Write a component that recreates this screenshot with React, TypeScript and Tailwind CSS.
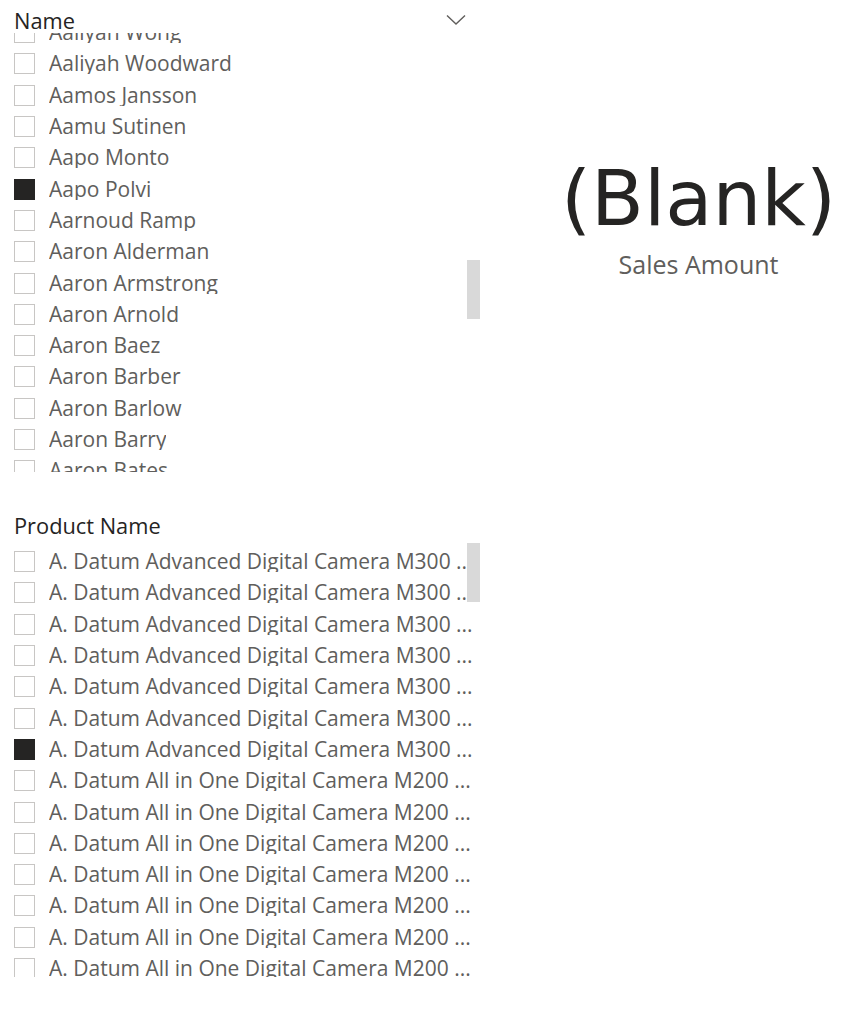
import React from 'react';

const names = [
  'Aaliyah Wong',
  'Aaliyah Woodward',
  'Aamos Jansson',
  'Aamu Sutinen',
  'Aapo Monto',
  'Aapo Polvi',
  'Aarnoud Ramp',
  'Aaron Alderman',
  'Aaron Armstrong',
  'Aaron Arnold',
  'Aaron Baez',
  'Aaron Barber',
  'Aaron Barlow',
  'Aaron Barry',
  'Aaron Bates',
];

const products = [
  ...Array(7).fill('A. Datum Advanced Digital Camera M300 ...'),
  ...Array(7).fill('A. Datum All in One Digital Camera M200 ...'),
];

const font = { fontFamily: '"Open Sans", "Noto Sans", sans-serif' };

const Checkbox: React.FC<{ checked?: boolean }> = ({ checked }) => (
  <span
    className={`shrink-0 w-[21px] h-[21px] border-[1.5px] ${
      checked ? 'bg-[#252423] border-[#252423]' : 'bg-white border-[#c8c6c4]'
    }`}
  />
);

const Row: React.FC<{ label: string; checked?: boolean }> = ({ label, checked }) => (
  <div className="h-[31.3px] flex items-center gap-[14px] pl-[14px]">
    <Checkbox checked={checked} />
    <span className="whitespace-nowrap overflow-hidden text-[21px] text-[#605e5c] leading-none">
      {label}
    </span>
  </div>
);

const Slicer: React.FC<{
  title: string;
  items: string[];
  checkedIndex: number;
  offset: number;
  thumbTop: number;
  chevron?: boolean;
}> = ({ title, items, checkedIndex, offset, thumbTop, chevron }) => (
  <div className="w-[480px]" style={font}>
    <div className="h-[33px] flex items-center justify-between pl-[14px] pr-[14px]">
      <span className="text-[21.8px] text-[#252423] leading-none mt-[9px]">{title}</span>
      {chevron && (
        <svg width="20" height="12" viewBox="0 0 20 12" className="mt-[6px]">
          <path d="M1 1.5 L10 10 L19 1.5" fill="none" stroke="#605e5c" strokeWidth="1.4" />
        </svg>
      )}
    </div>
    <div className="relative h-[439px] overflow-hidden">
      <div className="w-[480px]" style={{ marginTop: offset }}>
        {items.map((it, i) => (
          <Row key={i} label={it} checked={i === checkedIndex} />
        ))}
      </div>
      <div
        className="absolute right-0 w-[13px] h-[59px] bg-[#d9d9d9]"
        style={{ top: thumbTop }}
      />
    </div>
  </div>
);

export default function App() {
  return (
    <div className="w-[866px] h-[1012px] bg-white flex">
      <div className="flex flex-col">
        <Slicer title="Name" items={names} checkedIndex={5} offset={-16} thumbTop={227} chevron />
        <div className="h-[33px]" />
        <Slicer title="Product Name" items={products} checkedIndex={6} offset={8} thumbTop={5} />
      </div>
      <div className="flex-1 flex flex-col items-center pl-[51px] pt-[160px]">
        <span
          className="text-[77px] leading-none text-[#252423]"
          style={{ fontFamily: '"DejaVu Sans", sans-serif' }}
        >
          (Blank)
        </span>
        <span className="text-[25px] text-[#605e5c] mt-[9px]" style={font}>
          Sales Amount
        </span>
      </div>
    </div>
  );
}
